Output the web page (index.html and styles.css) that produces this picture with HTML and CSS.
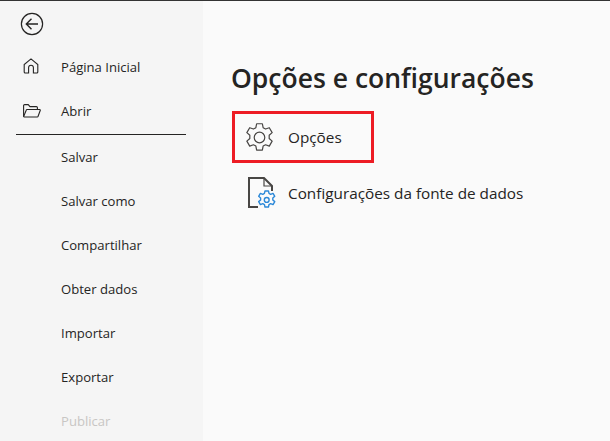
FILE: index.html
```html
<!DOCTYPE html>
<html lang="pt">
<head>
    <meta charset="UTF-8">
    <meta name="viewport" content="width=device-width, initial-scale=1.0">
    <title>Opções e configurações</title>
    <link rel="stylesheet" href="styles.css">
</head>
<body>
    <div class="app">
        <nav class="sidebar">
            <button class="back" type="button" aria-label="Voltar">
                <svg width="24" height="24" viewBox="0 0 24 24" fill="none" stroke="#252423" stroke-width="1.2">
                    <circle cx="12" cy="12" r="10.6"/>
                    <path d="M18 12H6.5M11.5 6.8 6.3 12l5.2 5.2" stroke-width="1.4"/>
                </svg>
            </button>
            <ul class="menu menu-top">
                <li class="menu-item">
                    <svg class="menu-icon" width="16" height="16" viewBox="0 0 16 16" fill="none" stroke="#252423" stroke-width="1.1">
                        <path d="M5.6 15H2.2a1 1 0 0 1-1-1V6.6L8 .9l6.8 5.7V14a1 1 0 0 1-1 1h-3.4V9.6a2.4 2.4 0 0 0-4.8 0z"/>
                    </svg>
                    Página Inicial
                </li>
                <li class="menu-item">
                    <svg class="menu-icon folder" width="18" height="14" viewBox="0 0 18 14" fill="none" stroke="#252423" stroke-width="1.1">
                        <path d="M.6 12.6V1.6a1 1 0 0 1 1-1h3.6l1.8 2h6.4a1 1 0 0 1 1 1V5.4"/>
                        <path d="M.6 12.6 3.2 6.2a1 1 0 0 1 .9-.7h12.6a.6.6 0 0 1 .6.8l-2.2 6a1 1 0 0 1-.9.7H1.4a.8.8 0 0 1-.8-.4z"/>
                    </svg>
                    Abrir
                </li>
            </ul>
            <hr class="divider">
            <ul class="menu">
                <li class="menu-item">Salvar</li>
                <li class="menu-item">Salvar como</li>
                <li class="menu-item">Compartilhar</li>
                <li class="menu-item">Obter dados</li>
                <li class="menu-item">Importar</li>
                <li class="menu-item">Exportar</li>
                <li class="menu-item disabled">Publicar</li>
            </ul>
        </nav>
        <main class="content">
            <h1>Opções e configurações</h1>
            <div class="option selected">
                <svg class="option-icon" width="33" height="33" viewBox="0 0 30 30" fill="none" stroke="#484644" stroke-width="1.1">
                    <circle cx="15" cy="15" r="4.8"/>
                    <path d="M12.4 2.5h5.2l.7 3.6 2.2 1.2 3.4-1.2 2.6 4.5-2.7 2.4v2.9l2.7 2.4-2.6 4.5-3.4-1.2-2.2 1.2-.7 3.6h-5.2l-.7-3.6-2.2-1.2-3.4 1.2-2.6-4.5 2.7-2.4v-2.9l-2.7-2.4 2.6-4.5 3.4 1.2 2.2-1.2z" stroke-linejoin="round"/>
                </svg>
                Opções
            </div>
            <div class="option">
                <svg class="option-icon second" width="33" height="34" viewBox="0 0 33 34" fill="none">
                    <path d="M14 31H5V2h15l8 8v5" stroke="#484644" stroke-width="2"/>
                    <path d="M20 2v8h8" stroke="#484644" stroke-width="1.2"/>
                    <g transform="translate(-.4 -3) scale(1.15)">
                        <path d="M18.6 15.6h3l.5 2.2 1.4.7 2.1-.8 1.5 2.6-1.7 1.5v1.6l1.7 1.5-1.5 2.6-2.1-.8-1.4.7-.5 2.2h-3l-.5-2.2-1.4-.7-2.1.8-1.5-2.6 1.7-1.5v-1.6l-1.7-1.5 1.5-2.6 2.1.8 1.4-.7z" stroke="#2b88d8" stroke-width="1.2" stroke-linejoin="round"/>
                        <circle cx="20.1" cy="23.4" r="2.1" stroke="#2b88d8" stroke-width="1.2"/>
                    </g>
                </svg>
                Configurações da fonte de dados
            </div>
        </main>
    </div>
</body>
</html>
```

FILE: styles.css
```css
html, body { margin: 0; height: 100%; overflow: hidden; }
body { font-family: "Open Sans", "Noto Sans", Arial, sans-serif; color: #252423; background: #fafafa; }
.app { display: flex; height: 441px; border-top: 1px solid #333; box-sizing: border-box; }

.sidebar { width: 203px; flex: none; background: #f5f5f5; }
.back { display: block; padding: 0; margin: 11px 0 0 20px; height: 24px; border: none; background: none; }
.menu { list-style: none; margin: 0; padding: 0; }
.menu-top { margin-top: 9px; }
.menu-item { position: relative; height: 44px; line-height: 44px; padding-left: 61px; font-size: 13.1px; }
.menu-icon { position: absolute; left: 23px; top: 13px; }
.menu-icon.folder { top: 15px; }
.menu-item.disabled { color: #c8c6c4; }
.divider { height: 1px; margin: 1px 17px 0 16px; border: none; background: #252423; }

.content { flex: 1; padding: 0 28px; }
h1 { margin: 56px 0 12px; font-size: 26.5px; line-height: 42px; font-weight: 600; }
.option { display: flex; align-items: center; height: 46px; width: 136px; margin-left: 1px; font-size: 15.3px; border: 3px solid transparent; white-space: nowrap; }
.option.selected { border-color: #ed1c24; }
.option + .option { margin-top: 4px; }
.option-icon { flex: none; margin: 0 12px 0 8px; }
.option-icon.second { margin: 0 11px 0 9px; }
```
